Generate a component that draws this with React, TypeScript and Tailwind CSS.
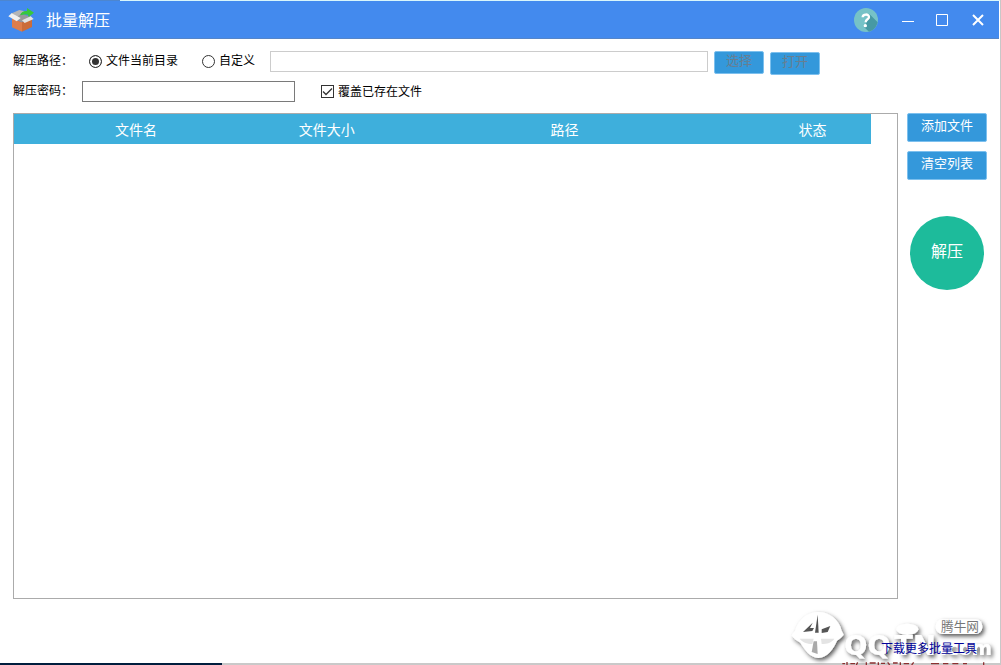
import React from "react";

const columns = [
  { name: "文件名", className: "w-[28.5%]" },
  { name: "文件大小", className: "w-[16%]" },
  { name: "路径", className: "w-[39.5%]" },
  { name: "状态", className: "w-[16%] pl-5" },
];

const BoxIcon: React.FC = () => (
  <svg width="28" height="26" viewBox="0 0 84 78" aria-hidden="true">
    <path d="M12 34 42 46 42 74 12 61Z" fill="#de7d4b" />
    <path d="M42 46 72 34 72 60 42 74Z" fill="#cb6c3a" />
    <path d="M15 32 40 20 70 30 42 46Z" fill="#98999a" />
    <path d="M8 20 34 9 50 13 26 31Z" fill="#b4b5b6" />
    <path d="M1 28 11 19 38 33 26 43Z" fill="#f0f0ef" />
    <path d="M42 40 68 28 77 36 50 48Z" fill="#e2e3e3" />
    <path d="M36 25C40 14 48 11 57 12L57 3 78 17 62 30 60 23C51 21 45 23 36 25Z" fill="#37c83c" />
  </svg>
);

const HelpIcon: React.FC = () => (
  <svg width="26" height="26" viewBox="0 0 78 78" aria-hidden="true">
    <circle cx="39" cy="39" r="36" fill="#76c2c7" />
    <path d="M50 22 74 46C70 61 61 71 48 74L33 60 42 44Z" fill="#4799a3" />
    <path
      d="M29 31C29 20 48 20 48 30C48 38 38 36 38 46"
      fill="none"
      stroke="#fff"
      strokeWidth="7"
    />
    <circle cx="37" cy="56" r="5" fill="#fff" />
  </svg>
);

const Watermark: React.FC = () => (
  <svg
    className="pointer-events-none absolute right-0 bottom-0"
    width="221"
    height="75"
    viewBox="0 0 663 225"
    aria-hidden="true"
  >
    <defs>
      <filter id="shade" x="-10%" y="-10%" width="120%" height="130%">
        <feDropShadow dx="6" dy="7" stdDeviation="6" floodColor="#000" floodOpacity="0.65" />
      </filter>
    </defs>
    <g filter="url(#shade)">
      <path
        d="M118 66C150 66 180 88 188 122L194 134C186 144 180 148 174 152C164 176 146 202 118 204C92 202 76 178 64 158C52 152 44 146 38 136L48 122C58 90 84 66 118 66Z"
        fill="#fff"
      />
      <ellipse cx="385" cy="118" rx="33" ry="17" fill="#fff" />
      <rect x="470" y="88" width="140" height="44" rx="20" fill="#fff" />
      <g fill="#fff" className="font-['DejaVu_Sans',sans-serif] font-bold">
        <text x="196" y="194" className="text-[82px]">
          QQ
        </text>
        <text x="346" y="194" className="text-[82px]">
          TN
        </text>
        <text x="482" y="194" className="text-[58px]">
          .com
        </text>
      </g>
    </g>
    <g fill="#555">
      <path d="M116 74 119 128H108Z" />
      <path d="M101 98 93 114H105L100 123 72 126Z" />
      <path d="M154 108 128 118V129L146 126Z" />
      <path d="M104 154H114L116 192 98 186Z" fill="#aaa" />
    </g>
    <path
      d="M62 146H104L100 162C84 162 70 156 62 146ZM126 146H166C158 158 144 162 128 162Z"
      fill="#e4e4e4"
    />
    <text
      x="486"
      y="123"
      fill="#777"
      className="font-['Noto_Sans_CJK_SC',sans-serif] text-[38px]"
    >
      腾牛网
    </text>
    <path
      d="M190 221H198M204 216V225M214 221H228M236 217 232 225M262 217V225M272 219H290M298 217V225M306 220H318M326 217 332 225M342 219H356M364 217V225M374 221H390M404 217 398 225M456 221H480M492 221H508M520 221H538M552 221H564M614 217V225"
      fill="none"
      stroke="#8b3030"
      strokeWidth="4"
    />
  </svg>
);

const inputStyle = "border bg-white px-1 text-xs outline-none";
const radioStyle =
  "size-[13px] appearance-none rounded-full border border-[#333] bg-white checked:bg-[#333] checked:shadow-[inset_0_0_0_2px_white]";
const buttonStyle = "rounded-xs border border-[#7dc0ee] bg-[#3498db] text-[13px]";

export default function App() {
  const [target, setTarget] = React.useState("current");
  const [overwrite, setOverwrite] = React.useState(true);

  return (
    <div className="relative flex min-h-screen flex-col border-r border-[#c8c8c8] bg-white font-['Liberation_Sans','Noto_Sans_CJK_SC',sans-serif] text-xs text-black">
      <div className="flex h-px bg-[#d9f6fb]">
        <div className="w-[12%] bg-[#4d86cf]" />
      </div>
      <header className="mr-px flex h-[38px] items-center border-b border-[#5585c8] bg-[#438aee] pr-[14px] pl-2 text-white">
        <BoxIcon />
        <h1 className="ml-[10px] pt-[3px] text-base">批量解压</h1>
        <div className="ml-auto flex items-center">
          <button aria-label="帮助" className="mr-[14px]">
            <HelpIcon />
          </button>
          <button aria-label="最小化" className="px-2">
            <svg width="14" height="14" viewBox="0 0 14 14">
              <path d="M1 8.500H13" stroke="#fff" />
            </svg>
          </button>
          <button aria-label="最大化" className="ml-1 px-2">
            <svg width="14" height="14" viewBox="0 0 14 14">
              <path d="M1.500 1.500H12.500V12.500H1.500Z" fill="none" stroke="#fff" />
            </svg>
          </button>
          <button aria-label="关闭" className="ml-[14px]">
            <svg width="14" height="14" viewBox="0 0 14 14">
              <path d="M2 2 12 12M12 2 2 12" stroke="#fff" strokeWidth="2" />
            </svg>
          </button>
        </div>
      </header>

      <main className="flex flex-1 flex-col pt-3 pl-[13px]">
        <div className="flex items-start">
          <span className="w-[76px] leading-5">解压路径：</span>
          <label className="flex w-[113px] items-center gap-1 leading-5">
            <input
              type="radio"
              name="target"
              className={radioStyle}
              checked={target === "current"}
              onChange={() => setTarget("current")}
            />
            文件当前目录
          </label>
          <label className="flex w-[68px] items-center gap-1 leading-5">
            <input
              type="radio"
              name="target"
              className={radioStyle}
              checked={target === "custom"}
              onChange={() => setTarget("custom")}
            />
            自定义
          </label>
          <input
            aria-label="自定义路径"
            className={`${inputStyle} h-[21px] min-w-0 flex-1 border-[#ccc]`}
            disabled={target !== "custom"}
          />
          <button
            className={`${buttonStyle} ml-[6px] h-[23px] w-[50px] pb-1 leading-4 text-[#687e90]`}
            disabled={target !== "custom"}
          >
            选择
          </button>
          <button
            className={`${buttonStyle} mt-px mr-[180px] ml-[6px] h-[23px] w-[50px] pb-1 leading-4 text-[#687e90]`}
            disabled={target !== "custom"}
          >
            打开
          </button>
        </div>

        <div className="mt-[6px] flex items-center">
          <label htmlFor="password" className="w-[69px] pb-[2px]">
            解压密码：
          </label>
          <input
            id="password"
            className={`${inputStyle} h-[21px] w-[213px] border-[#7a7a7a]`}
          />
          <label className="ml-[26px] flex items-center gap-1">
            <span className="relative flex">
              <input
                type="checkbox"
                className="size-[13px] appearance-none border border-[#333] bg-white"
                checked={overwrite}
                onChange={(e) => setOverwrite(e.target.checked)}
              />
              {overwrite && (
                <svg
                  className="pointer-events-none absolute inset-0"
                  width="13"
                  height="13"
                  viewBox="0 0 13 13"
                >
                  <path d="M2 6.500 5 9.500 11 3.500" fill="none" stroke="#333" strokeWidth="1.300" />
                </svg>
              )}
            </span>
            覆盖已存在文件
          </label>
        </div>

        <div className="mt-[11px] flex flex-1">
          <section className="mb-16 min-w-0 flex-1 border border-[#ababab] pr-[26px]">
            <table className="w-full table-fixed">
              <thead>
                <tr className="h-[30px] bg-[#3eafdc] text-sm text-white">
                  {columns.map((column) => (
                    <th key={column.name} className={`${column.className} pt-[2px] font-normal`}>
                      {column.name}
                    </th>
                  ))}
                </tr>
              </thead>
            </table>
          </section>
          <aside className="mr-[13px] ml-[9px] flex w-20 flex-col items-center">
            <button className={`${buttonStyle} h-[29px] w-full pb-[3px] text-white`}>
              添加文件
            </button>
            <button className={`${buttonStyle} mt-[9px] h-[29px] w-full pb-[3px] text-white`}>
              清空列表
            </button>
            <button className="mt-9 size-[74px] rounded-full bg-[#1dbb9b] pb-[2px] text-base text-white">
              解压
            </button>
          </aside>
        </div>
      </main>

      <div className="flex h-[2px] bg-[#c9c9c9]">
        <div className="w-[22.2%] bg-[#001d3d]" />
      </div>
      <Watermark />
      <a
        href="#more"
        className="absolute right-[23px] bottom-[7px] leading-[18px] text-[#000099]"
      >
        下载更多批量工具
      </a>
    </div>
  );
}
